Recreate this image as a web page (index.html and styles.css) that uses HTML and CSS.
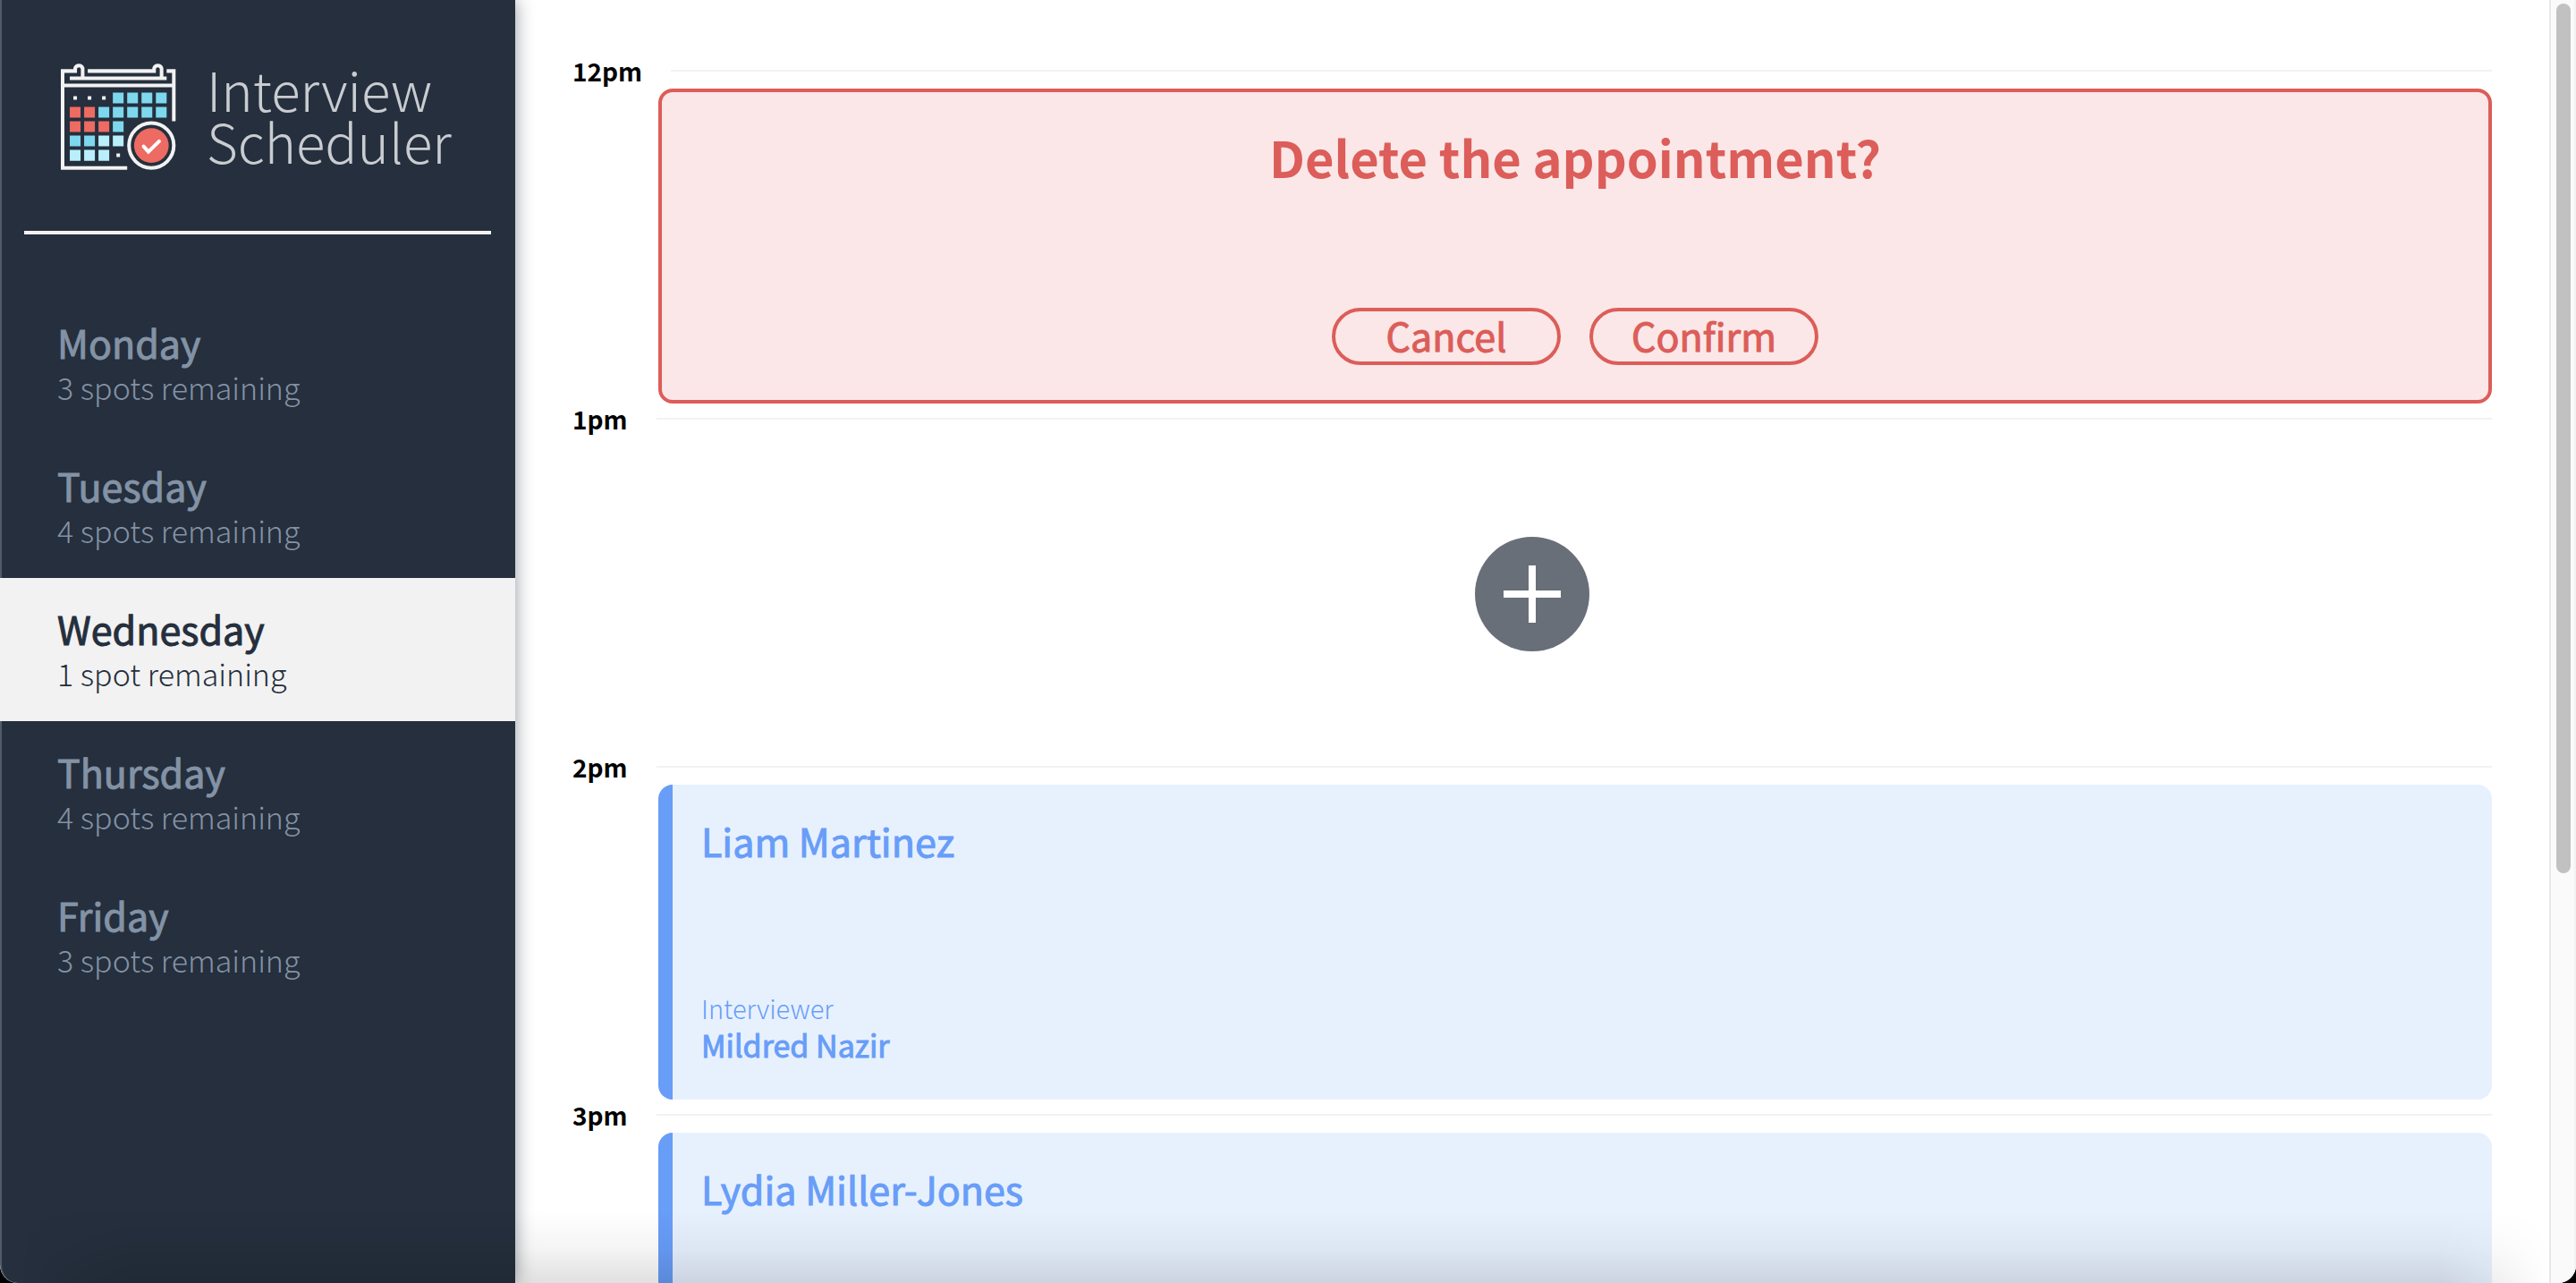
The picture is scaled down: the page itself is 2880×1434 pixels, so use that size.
FILE: index.html
```html
<!DOCTYPE html>
<html lang="en">
<head>
<meta charset="utf-8">
<meta name="viewport" content="width=device-width, initial-scale=1">
<title>Interview Scheduler</title>
<link rel="stylesheet" href="styles.css">
</head>
<body>
<div class="window">
  <aside class="sidebar">
    <div class="logo">
      <svg class="logo__icon" viewBox="54 44 386 362" aria-hidden="true">
        <g fill="none" stroke="#f2f2f2" stroke-width="12">
          <path d="M276 399H60V75H102V66a13 13 0 0 1 25 0V99"/>
          <path d="M144 75H366V66a13 13 0 0 1 25 0V99"/>
          <path d="M84 99H408M60 123H432M408 75H432V243"/>
          <circle cx="357" cy="324" r="75"/>
        </g>
        <path fill="#f2f2f2" d="M96 159h12v12H96zM144 159h12v12h-12zM192 159h12v12h-12zM240 351h12v12h-12z"/>
        <path fill="#7dd8ee" d="M228 147h36v36h-36zM276 147h36v36h-36zM324 147h36v36h-36zM372 147h36v36h-36zM180 195h36v36h-36zM228 195h36v36h-36zM276 195h36v36h-36zM324 195h36v36h-36zM372 195h36v36h-36zM228 243h36v36h-36zM84 291h36v36H84zM132 291h36v36h-36z"/>
        <path fill="#b9effa" d="M180 291h36v36h-36zM228 291h36v36h-36zM84 339h36v36H84zM132 339h36v36h-36zM180 339h36v36h-36z"/>
        <path fill="#ed6b62" d="M84 195h36v36H84zM132 195h36v36h-36zM84 243h36v36H84zM132 243h36v36h-36zM180 243h36v36h-36z"/>
        <circle cx="357" cy="324" r="58" fill="#ed6b62"/>
        <path d="M331 327l16 18 36-35" fill="none" stroke="#fff" stroke-width="12" stroke-linecap="round"/>
      </svg>
      <span class="logo__text">Interview<br>Scheduler</span>
    </div>
    <hr class="separator">
    <nav>
      <ul class="days">
        <li><a class="day" href="#monday"><span class="day__name">Monday</span><span class="day__spots">3 spots remaining</span></a></li>
        <li><a class="day" href="#tuesday"><span class="day__name">Tuesday</span><span class="day__spots">4 spots remaining</span></a></li>
        <li><a class="day day--selected" href="#wednesday" aria-current="true"><span class="day__name">Wednesday</span><span class="day__spots">1 spot remaining</span></a></li>
        <li><a class="day" href="#thursday"><span class="day__name">Thursday</span><span class="day__spots">4 spots remaining</span></a></li>
        <li><a class="day" href="#friday"><span class="day__name">Friday</span><span class="day__spots">3 spots remaining</span></a></li>
      </ul>
    </nav>
  </aside>

  <main class="schedule">
    <article class="slot">
      <header class="slot__time"><h4>12pm</h4><hr></header>
      <section class="card card--confirm">
        <h1>Delete the appointment?</h1>
        <div class="card__actions">
          <button class="button" type="button">Cancel</button>
          <button class="button" type="button">Confirm</button>
        </div>
      </section>
    </article>
    <article class="slot">
      <header class="slot__time"><h4>1pm</h4><hr></header>
      <section class="empty">
        <button class="add" type="button" aria-label="Add appointment">
          <svg viewBox="0 0 128 128" aria-hidden="true"><path d="M64 32V96M32 64H96" stroke="#fff" stroke-width="8"/></svg>
        </button>
      </section>
    </article>
    <article class="slot">
      <header class="slot__time"><h4>2pm</h4><hr></header>
      <section class="card card--show">
        <h2>Liam Martinez</h2>
        <div>
          <h4 class="card__label">Interviewer</h4>
          <h3 class="card__person">Mildred Nazir</h3>
        </div>
      </section>
    </article>
    <article class="slot">
      <header class="slot__time"><h4>3pm</h4><hr></header>
      <section class="card card--show">
        <h2>Lydia Miller-Jones</h2>
      </section>
    </article>
  </main>

  <div class="scrollbar" aria-hidden="true"><div class="scrollbar__thumb"></div></div>
</div>
</body>
</html>
```

FILE: styles.css
```css
*, *::before, *::after { box-sizing: border-box; }

body {
  margin: 0;
  background: #000;
  font-family: "Noto Sans CJK SC", "Noto Sans", sans-serif;
  font-weight: 400;
}

h1, h2, h3, h4, ul { margin: 0; padding: 0; }
ul { list-style: none; }
a { color: inherit; text-decoration: none; }

.window {
  position: relative;
  display: flex;
  height: 100vh;
  overflow: hidden;
  border-radius: 0 0 20px 20px;
  background: #fff;
}

/* Shade along the bottom edge of the window */
.window::after {
  content: "";
  position: absolute;
  inset: auto 0 0 0;
  height: 80px;
  margin: 0 30px 0 24px;
  background: linear-gradient(rgba(0, 0, 0, 0), rgba(0, 0, 0, 0.04) 50%, rgba(0, 0, 0, 0.12));
  -webkit-mask-image: linear-gradient(90deg, transparent, #000 120px, #000 calc(100% - 120px), transparent);
  mask-image: linear-gradient(90deg, transparent, #000 120px, #000 calc(100% - 120px), transparent);
  pointer-events: none;
}

/* Sidebar */
.sidebar {
  flex: 0 0 20%;
  border-left: 2px solid #4f5c69;
  border-bottom-left-radius: 20px;
  background: #252f3d;
  box-shadow: 0 0 20px rgba(37, 47, 61, 0.5);
}

.logo {
  display: flex;
  align-items: center;
  gap: 34px;
  height: 258px;
  padding: 0 0 0 66px;
}
.logo__icon { width: 129px; height: 121px; }
.logo__text {
  padding-bottom: 2px;
  color: #c9ccd0;
  font-size: 60px;
  font-weight: 300;
  line-height: 58px;
}

.separator {
  height: 4px;
  margin: 0 27px 64px 25px;
  border: 0;
  background: #f2f2f2;
}

.day {
  display: flex;
  flex-direction: column;
  justify-content: center;
  height: 160px;
  padding-left: 62px;
  color: #8392a5;
}
.day--selected { background: #f2f2f2; color: #252f3d; margin-left: -2px; padding-left: 64px; }
.day__name { font-size: 43px; font-weight: 400; line-height: 54px; }
.day__spots { font-size: 34px; font-weight: 300; line-height: 48px; }

/* Slightly heavier strokes for regular-weight names and actions */
.day__name, .button, .card--show h2, .card__person {
  -webkit-text-stroke: 1px currentColor;
}

/* Schedule */
.schedule {
  flex: 1;
  min-width: 0;
  padding: 62px 64px 0;
  overflow: hidden;
}

.slot__time {
  display: flex;
  align-items: flex-start;
  height: 37px;
}
.slot__time h4 {
  min-width: 94px;
  padding-right: 32px;
  color: #000;
  font-size: 28px;
  font-weight: 700;
  line-height: 35px;
}
.slot__time hr {
  flex: 1;
  height: 2px;
  margin: 16px 0 0;
  border: 0;
  background: #f2f2f2;
}

.card, .empty {
  display: flex;
  height: 352px;
}
.card {
  flex-direction: column;
  justify-content: space-between;
  margin-left: 96px;
  border-radius: 16px;
}
.card--confirm {
  align-items: center;
  padding: 32px 32px 39px;
  border: 4px solid #dc5d59;
  background: #fbe7e7;
  color: #dc5d59;
}
.card--confirm h1 { font-size: 56px; font-weight: 700; line-height: 80px; }
.card__actions { display: flex; gap: 32px; }

.button {
  width: 256px;
  height: 64px;
  padding: 0 0 4px;
  border: 4px solid #dc5d59;
  border-radius: 32px;
  background: transparent;
  color: inherit;
  font-family: inherit;
  font-size: 43px;
  font-weight: 400;
  line-height: 52px;
}

.card--show {
  padding: 32px 32px 40px;
  border-left: 16px solid #689df8;
  background: #e7f1fe;
  color: #689df8;
}
.card--show h2 { font-size: 43px; font-weight: 400; line-height: 60px; }
.card__label { font-size: 29px; font-weight: 300; line-height: 42px; }
.card__person { font-size: 34px; font-weight: 400; line-height: 42px; }

.empty { align-items: center; justify-content: center; }
.add {
  width: 128px;
  height: 128px;
  padding: 0;
  border: 0;
  border-radius: 50%;
  background: #686f79;
}
.add svg { display: block; }

/* Scrollbar */
.scrollbar {
  flex: 0 0 30px;
  padding: 4px 4px 0 6px;
  border-left: 2px solid #e8e8e8;
  border-right: 2px solid #f2f2f2;
  background: #fafafa;
}
.scrollbar__thumb {
  width: 16px;
  height: 68%;
  border-radius: 8px;
  background: #c1c1c1;
}
```
